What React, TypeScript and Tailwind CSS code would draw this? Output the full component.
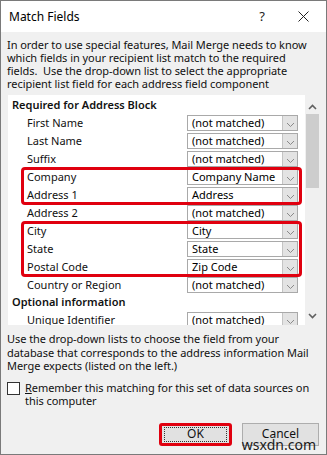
import React from "react";

const rows1 = [
  { label: "First Name", value: "(not matched)" },
  { label: "Last Name", value: "(not matched)" },
  { label: "Suffix", value: "(not matched)" },
];
const rowsCompany = [
  { label: "Company", value: "Company Name" },
  { label: "Address 1", value: "Address" },
];
const rows2 = [{ label: "Address 2", value: "(not matched)" }];
const rowsCity = [
  { label: "City", value: "City" },
  { label: "State", value: "State" },
  { label: "Postal Code", value: "Zip Code" },
];
const rows3 = [{ label: "Country or Region", value: "(not matched)" }];

function Chevron() {
  return (
    <svg width="9" height="6" viewBox="0 0 9 6" className="mt-[3px]">
      <path d="M1 1 L4.5 4.5 L8 1" fill="none" stroke="#8a8a8a" strokeWidth="1" />
    </svg>
  );
}

function Select({ value }: { value: string }) {
  return (
    <div className="flex h-[16px] w-[111px] border border-[#a9a9a9] bg-white">
      <div className="flex-1 pl-[4px] leading-[14px] text-black">{value}</div>
      <div className="flex w-[15px] items-center justify-center border-l border-[#c4c4c4] bg-[#e3e3e3]">
        <Chevron />
      </div>
    </div>
  );
}

function Row({ label, value }: { label: string; value: string }) {
  return (
    <div className="flex h-[18px] items-center">
      <div className="w-[179px] pl-[19px]">{label}</div>
      <Select value={value} />
    </div>
  );
}

function Highlight({ children }: { children: React.ReactNode }) {
  return (
    <div className="relative">
      {children}
      {/* red annotation box */}
      <div className="pointer-events-none absolute bottom-[-1px] left-[13px] right-[3px] top-[-1px] rounded-[4px] border-[3px] border-[#e0000f]" />
    </div>
  );
}

export default function App() {
  return (
    <div className="relative flex h-[455px] w-[327px] flex-col border border-[#7a7a7a] bg-[#f0f0f0] font-['Noto_Sans',sans-serif] text-[11px] text-[#111]">
      {/* Title bar */}
      <div className="flex h-[31px] items-center bg-white pl-[8px] pr-[17px]">
        <div className="flex-1 text-[12px] text-black">Match Fields</div>
        <div className="mr-[33px] text-[13px] text-[#222]">?</div>
        <svg width="11" height="11" viewBox="0 0 11 11">
          <path d="M0.5 0.5 L10.5 10.5 M10.5 0.5 L0.5 10.5" stroke="#222" strokeWidth="1" />
        </svg>
      </div>

      <div className="flex flex-1 flex-col px-[6px]">
        <p className="mt-[6px] whitespace-nowrap leading-[13px] tracking-[-0.05px]">
          In order to use special features, Mail Merge needs to know
          <br />
          which fields in your recipient list match to the required
          <br />
          fields.&nbsp; Use the drop-down list to select the appropriate
          <br />
          recipient list field for each address field component
        </p>

        {/* List box */}
        <div className="mt-[5px] ml-[1px] flex h-[230px] w-[312px]">
          <div className="h-full w-[297px] overflow-hidden bg-white pt-[2px]">
            <div className="flex h-[17px] items-center pl-[4px] font-semibold">Required for Address Block</div>
            {rows1.map((r) => (
              <Row key={r.label} {...r} />
            ))}
            <Highlight>
              {rowsCompany.map((r) => (
                <Row key={r.label} {...r} />
              ))}
            </Highlight>
            {rows2.map((r) => (
              <Row key={r.label} {...r} />
            ))}
            <Highlight>
              {rowsCity.map((r) => (
                <Row key={r.label} {...r} />
              ))}
            </Highlight>
            {rows3.map((r) => (
              <Row key={r.label} {...r} />
            ))}
            <div className="flex h-[17px] items-center pl-[4px] font-semibold">Optional information</div>
            <Row label="Unique Identifier" value="(not matched)" />
          </div>
          {/* Scrollbar */}
          <div className="flex w-[15px] flex-col items-center">
            <svg width="9" height="6" viewBox="0 0 9 6" className="mt-[9px]">
              <path d="M1 5 L4.5 1.5 L8 5" fill="none" stroke="#606060" strokeWidth="1.6" />
            </svg>
            <div className="mt-[4px] h-[74px] w-[13px] bg-[#cdcdcd]" />
            <div className="flex-1" />
            <svg width="9" height="6" viewBox="0 0 9 6" className="mb-[6px]">
              <path d="M1 1 L4.5 4.5 L8 1" fill="none" stroke="#606060" strokeWidth="1.6" />
            </svg>
          </div>
        </div>

        <p className="mt-[7px] whitespace-nowrap leading-[13.5px] tracking-[-0.05px]">
          Use the drop-down lists to choose the field from your
          <br />
          database that corresponds to the address information Mail
          <br />
          Merge expects (listed on the left.)
        </p>

        <div className="mt-[8px] flex items-start">
          <div className="mt-[1px] h-[13px] w-[13px] shrink-0 border border-[#333] bg-white" />
          <div className="ml-[5px] whitespace-nowrap leading-[13.5px] tracking-[-0.05px]">
            <span className="underline">R</span>emember this matching for this set of data sources on
            <br />
            this computer
          </div>
        </div>

        <div className="mt-[15px] flex justify-end gap-[10px] pr-[1px]">
          <div className="flex h-[23px] w-[73px] items-center justify-center rounded-[3px] border-[3px] border-[#e0000f] bg-[#e1e1e1]">
            <div className="flex h-[15px] w-[63px] items-center justify-center border border-dotted border-[#333] text-[12px]">
              OK
            </div>
          </div>
          <div className="flex h-[23px] w-[77px] items-center justify-center border border-[#adadad] bg-[#e1e1e1] text-[12px]">
            Cancel
          </div>
        </div>
      </div>

      {/* watermark */}
      <div className="absolute bottom-[1px] right-[10px] text-[14px] leading-[16px] text-[#1a1a1a]">wsxdn.com</div>
    </div>
  );
}
